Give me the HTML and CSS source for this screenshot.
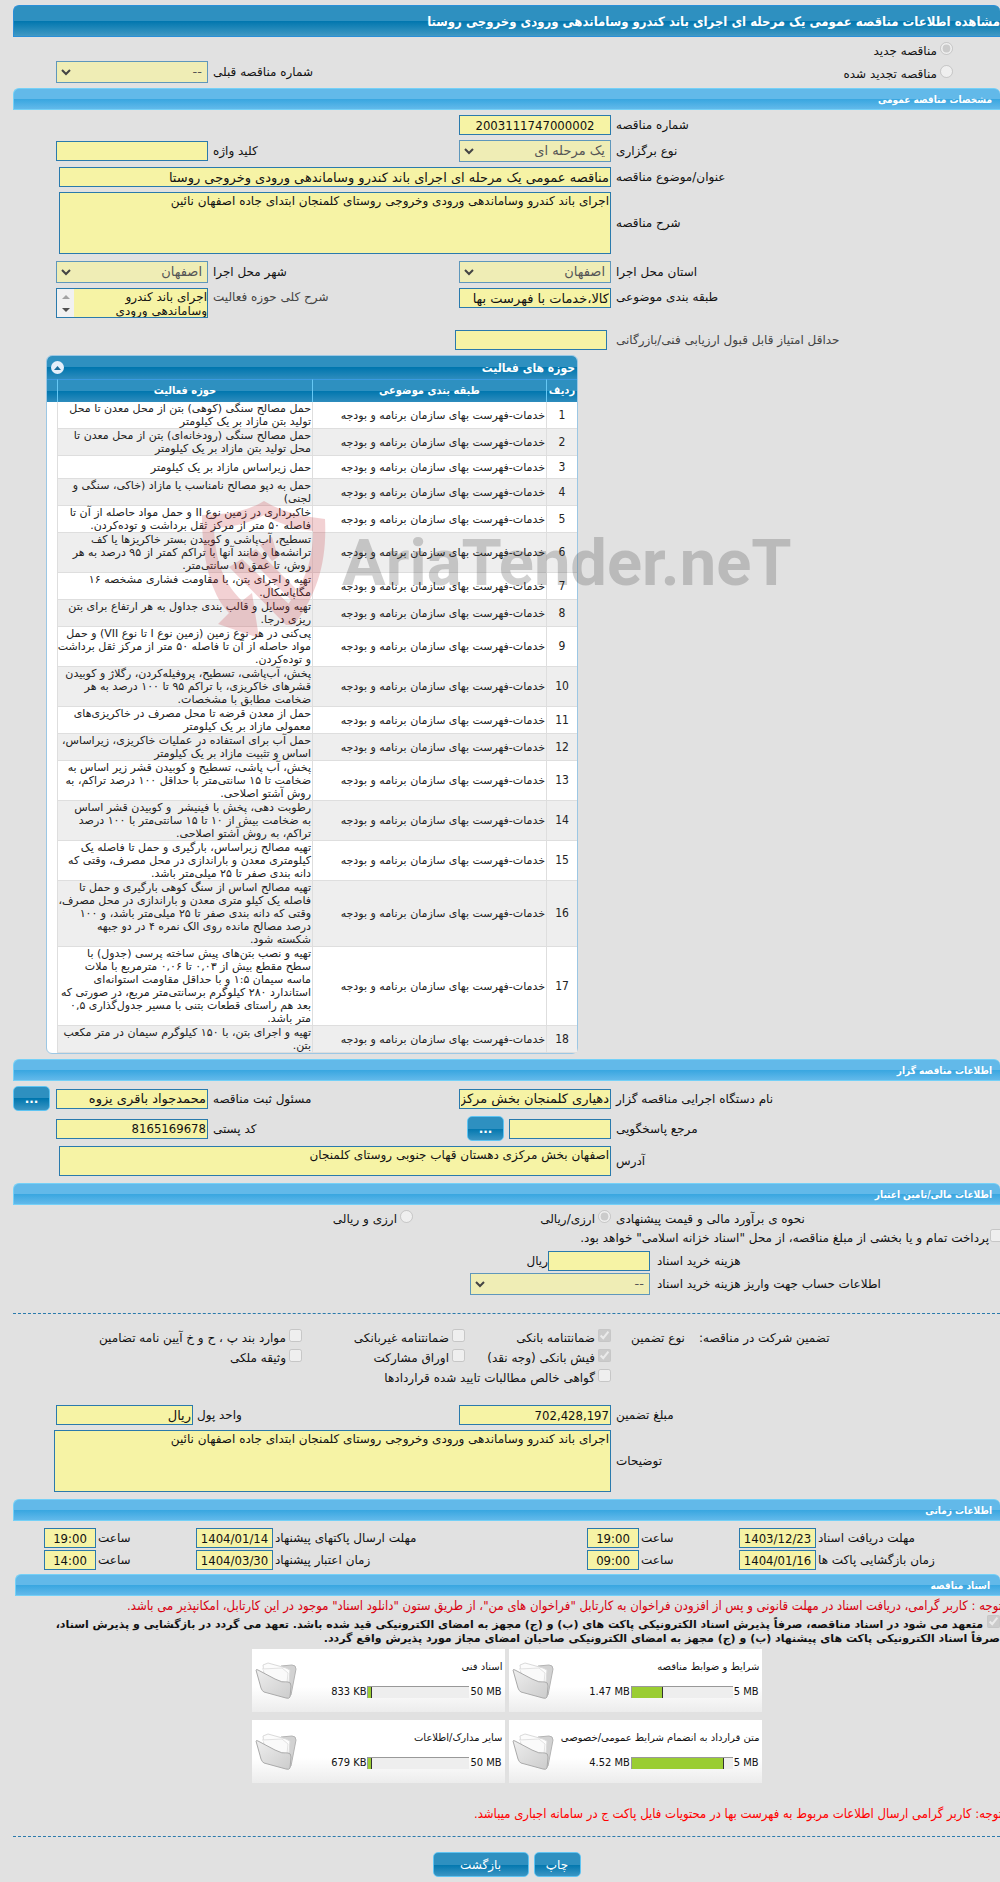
FILE: index.html
```html
<!DOCTYPE html>
<html lang="fa" dir="rtl">
<head>
<meta charset="utf-8">
<title>مشاهده اطلاعات مناقصه عمومی</title>
<link rel="stylesheet" href="styles.css">
</head>
<body>
<main class="page">
<h1 class="title-bar">مشاهده اطلاعات مناقصه عمومی یک مرحله ای اجرای باند کندرو وساماندهی ورودی وخروجی روستا</h1>

<div class="form kind">
  <div class="row">
    <label class="choice kind-choice"><input type="radio" name="kind" checked disabled>مناقصه جدید</label>
  </div>
  <div class="row kind-row">
    <label class="choice kind-choice"><input type="radio" name="kind" disabled>مناقصه تجدید شده</label>
    <span></span>
    <label class="lbl" for="prev">شماره مناقصه قبلی</label>
    <select id="prev" disabled><option>--</option></select>
  </div>
</div>

<h2 class="bar">مشخصات مناقصه عمومی</h2>
<section class="form">
  <div class="row">
    <label class="lbl" for="no">شماره مناقصه</label>
    <input class="num center" id="no" type="text" readonly value="2003111747000002">
  </div>
  <div class="row">
    <label class="lbl" for="type">نوع برگزاری</label>
    <select id="type" disabled><option>یک مرحله ای</option></select>
    <label class="lbl" for="kw">کلید واژه</label>
    <input id="kw" type="text" readonly>
  </div>
  <div class="row">
    <label class="lbl" for="subj">عنوان/موضوع مناقصه</label>
    <input class="wide" id="subj" type="text" readonly value="مناقصه عمومی یک مرحله ای اجرای باند کندرو وساماندهی ورودی وخروجی روستا">
  </div>
  <div class="row">
    <label class="lbl" for="desc">شرح مناقصه</label>
    <textarea class="wide tall" id="desc" readonly>اجرای باند کندرو وساماندهی ورودی وخروجی روستای کلمنجان ابتدای جاده اصفهان نائین</textarea>
  </div>
  <div class="row place">
    <label class="lbl" for="prov">استان محل اجرا</label>
    <select id="prov" disabled><option>اصفهان</option></select>
    <label class="lbl" for="city">شهر محل اجرا</label>
    <select id="city" disabled><option>اصفهان</option></select>
  </div>
  <div class="row top">
    <label class="lbl" for="cat">طبقه بندی موضوعی</label>
    <input id="cat" type="text" readonly value="کالا،خدمات با فهرست بها">
    <label class="lbl soft" for="scope">شرح کلی حوزه فعالیت</label>
    <textarea class="scroll" id="scope" readonly>اجرای باند کندرو وساماندهی ورودی وخروجی روستای کلمنجان ابتدای جاده اصفهان نائین</textarea>
  </div>
  <div class="row score">
    <label class="lbl soft" for="score">حداقل امتیاز قابل قبول ارزیابی فنی/بازرگانی</label>
    <input id="score" type="text" readonly>
  </div>
</section>

<section class="activity">
  <div class="activity-head">
    <h3>حوزه های فعالیت</h3>
    <button class="collapse" type="button" aria-label="بستن"><svg width="7" height="4" viewBox="0 0 7 4"><path d="M0 4L3.500 0L7 4z" fill="#1b6d9c"/></svg></button>
  </div>
  <table class="grid">
    <colgroup><col class="c-no"><col class="c-cat"><col class="c-act"><col class="c-end"></colgroup>
    <thead><tr><th>ردیف</th><th>طبقه بندی موضوعی</th><th>حوزه فعالیت</th><th></th></tr></thead>
    <tbody>
      <tr><td>1</td><td>خدمات-فهرست بهای سازمان برنامه و بودجه</td><td>حمل مصالح سنگی (کوهی) بتن از محل معدن تا محل<br>تولید بتن مازاد بر یک کیلومتر</td><td></td></tr>
      <tr><td>2</td><td>خدمات-فهرست بهای سازمان برنامه و بودجه</td><td>حمل مصالح سنگی (رودخانه‌ای) بتن از محل معدن تا<br>محل تولید بتن مازاد بر یک کیلومتر</td><td></td></tr>
      <tr><td>3</td><td>خدمات-فهرست بهای سازمان برنامه و بودجه</td><td>حمل زیراساس مازاد بر یک کیلومتر</td><td></td></tr>
      <tr><td>4</td><td>خدمات-فهرست بهای سازمان برنامه و بودجه</td><td>حمل به دپو مصالح نامناسب یا مازاد (خاکی، سنگی و<br>لجنی)</td><td></td></tr>
      <tr><td>5</td><td>خدمات-فهرست بهای سازمان برنامه و بودجه</td><td>خاکبرداری در زمین نوع II و حمل مواد حاصله از آن تا<br>فاصله ۵۰ متر از مرکز ثقل برداشت و توده‌کردن.</td><td></td></tr>
      <tr><td>6</td><td>خدمات-فهرست بهای سازمان برنامه و بودجه</td><td>تسطیح، آب‌پاشی و کوبیدن بستر خاکریزها یا کف<br>ترانشه‌ها و مانند آنها با تراکم کمتر از ۹۵ درصد به هر<br>روش، تا عمق ۱۵ سانتی‌متر.</td><td></td></tr>
      <tr><td>7</td><td>خدمات-فهرست بهای سازمان برنامه و بودجه</td><td>تهیه و اجرای بتن، با مقاومت فشاری مشخصه ۱۶<br>مگاپاسکال.</td><td></td></tr>
      <tr><td>8</td><td>خدمات-فهرست بهای سازمان برنامه و بودجه</td><td>تهیه وسایل و قالب بندی جداول به هر ارتفاع برای بتن<br>ریزی درجا.</td><td></td></tr>
      <tr><td>9</td><td>خدمات-فهرست بهای سازمان برنامه و بودجه</td><td>پی‌کنی در هر نوع زمین (زمین نوع I تا نوع VII) و حمل<br>مواد حاصله از آن تا فاصله ۵۰ متر از مرکز ثقل برداشت<br>و توده‌کردن.</td><td></td></tr>
      <tr><td>10</td><td>خدمات-فهرست بهای سازمان برنامه و بودجه</td><td>پخش، آب‌پاشی، تسطیح، پروفیله‌کردن، رگلاژ و کوبیدن<br>قشرهای خاکریزی، با تراکم ۹۵ تا ۱۰۰ درصد به هر<br>ضخامت مطابق با مشخصات.</td><td></td></tr>
      <tr><td>11</td><td>خدمات-فهرست بهای سازمان برنامه و بودجه</td><td>حمل از معدن قرضه تا محل مصرف در خاکریزی‌های<br>معمولی مازاد بر یک کیلومتر</td><td></td></tr>
      <tr><td>12</td><td>خدمات-فهرست بهای سازمان برنامه و بودجه</td><td>حمل آب برای استفاده در عملیات خاکریزی، زیراساس،<br>اساس و تثبیت مازاد بر یک کیلومتر</td><td></td></tr>
      <tr><td>13</td><td>خدمات-فهرست بهای سازمان برنامه و بودجه</td><td>پخش، آب پاشی، تسطیح و کوبیدن قشر زیر اساس به<br>ضخامت تا ۱۵ سانتی‌متر با حداقل ۱۰۰ درصد تراکم، به<br>روش آشتو اصلاحی.</td><td></td></tr>
      <tr><td>14</td><td>خدمات-فهرست بهای سازمان برنامه و بودجه</td><td>رطوبت دهی، پخش با فینیشر &nbsp;و کوبیدن قشر اساس<br>به ضخامت بیش از ۱۰ تا ۱۵ سانتی‌متر با ۱۰۰ درصد<br>تراکم، به روش آشتو اصلاحی.</td><td></td></tr>
      <tr><td>15</td><td>خدمات-فهرست بهای سازمان برنامه و بودجه</td><td>تهیه مصالح زیراساس، بارگیری و حمل تا فاصله یک<br>کیلومتری معدن و باراندازی در محل مصرف، وقتی که<br>دانه بندی صفر تا ۲۵ میلی‌متر باشد.</td><td></td></tr>
      <tr><td>16</td><td>خدمات-فهرست بهای سازمان برنامه و بودجه</td><td>تهیه مصالح اساس از سنگ کوهی بارگیری و حمل تا<br>فاصله یک کیلو متری معدن و باراندازی در محل مصرف،<br>وقتی که دانه بندی صفر تا ۲۵ میلی‌متر باشد، و ۱۰۰<br>درصد مصالح مانده روی الک نمره ۴ در دو جبهه<br>شکسته شود.</td><td></td></tr>
      <tr><td>17</td><td>خدمات-فهرست بهای سازمان برنامه و بودجه</td><td>تهیه و نصب بتن‌های پیش ساخته پرسی (جدول) با<br>سطح مقطع بیش از ۰,۰۳ تا ۰,۰۶ مترمربع با ملات<br>ماسه سیمان ۱:۵ و با حداقل مقاومت استوانه‌ای<br>استاندارد ۲۸۰ کیلوگرم برسانتی‌متر مربع، در صورتی که<br>بعد هم راستای قطعات بتنی با مسیر جدول‌گذاری ۰,۵<br>متر باشد.</td><td></td></tr>
      <tr><td>18</td><td>خدمات-فهرست بهای سازمان برنامه و بودجه</td><td>تهیه و اجرای بتن، با ۱۵۰ کیلوگرم سیمان در متر مکعب<br>بتن.</td><td></td></tr>
    </tbody>
  </table>
  <div class="watermark" dir="ltr">
    <svg width="124" height="138" viewBox="0 0 124 138" fill="none">
      <path d="M0 14Q40 14 62 0Q84 14 123 18C125 60 116 92 92 124L84 106C104 80 111 58 111 30Q84 27 62 14Q40 26 12 27C13 60 22 82 40 100L50 92L57 137L16 123L27 112C8 92 0 56 0 14z" fill="#c8323c"/>
      <path d="M27 66L40 58L92 108L90 124L84 124zM44 54L54 48L94 88L90 100zM58 44L70 36L76 56L70 60z" fill="#c8323c"/>
    </svg>
    <span>AriaTender.neT</span>
  </div>
</section>

<h2 class="bar">اطلاعات مناقصه گزار</h2>
<section class="form">
  <div class="row">
    <label class="lbl" for="org">نام دستگاه اجرایی مناقصه گزار</label>
    <input id="org" type="text" readonly value="دهیاری کلمنجان بخش مرکزی">
    <label class="lbl" for="owner">مسئول ثبت مناقصه</label>
    <input id="owner" type="text" readonly value="محمدجواد باقری یزوه">
    <button class="btn more last" type="button">...</button>
  </div>
  <div class="row">
    <label class="lbl" for="ref">مرجع پاسخگویی</label>
    <div class="with-button"><input id="ref" type="text" readonly><button class="btn more" type="button">...</button></div>
    <label class="lbl" for="zip">کد پستی</label>
    <input class="num" id="zip" type="text" readonly value="8165169678">
  </div>
  <div class="row">
    <label class="lbl" for="addr">آدرس</label>
    <textarea class="wide short" id="addr" readonly>اصفهان بخش مرکزی دهستان قهاب جنوبی روستای کلمنجان</textarea>
  </div>
</section>

<h2 class="bar spaced">اطلاعات مالی/تامین اعتبار</h2>
<section class="finance">
  <div class="estimate">
    <span class="lbl">نحوه ی برآورد مالی و قیمت پیشنهادی</span>
    <label class="choice"><input type="radio" name="cur" checked disabled>ارزی/ریالی</label>
    <label class="choice"><input type="radio" name="cur" disabled>ارزی و ریالی</label>
  </div>
  <label class="choice treasury"><input type="checkbox" disabled>پرداخت تمام و یا بخشی از مبلغ مناقصه، از محل "اسناد خزانه اسلامی" خواهد بود.</label>
  <div class="pay">
    <label class="lbl" for="cost">هزینه خرید اسناد</label>
    <div class="pay-field"><input id="cost" type="text" readonly>ریال</div>
    <label class="lbl" for="acc">اطلاعات حساب جهت واریز هزینه خرید اسناد</label>
    <select id="acc" disabled><option>--</option></select>
  </div>
</section>
<hr>
<section class="guarantee">
  <span class="g-title">تضمین شرکت در مناقصه:</span>
  <span class="g-kind">نوع تضمین</span>
  <label class="choice g-a"><input type="checkbox" checked disabled>ضمانتنامه بانکی</label>
  <label class="choice"><input type="checkbox" disabled>ضمانتنامه غیربانکی</label>
  <label class="choice"><input type="checkbox" disabled>موارد بند پ ، ح و خ آیین نامه تضامین</label>
  <label class="choice g-a"><input type="checkbox" checked disabled>فیش بانکی (وجه نقد)</label>
  <label class="choice"><input type="checkbox" disabled>اوراق مشارکت</label>
  <label class="choice"><input type="checkbox" disabled>وثیقه ملکی</label>
  <label class="choice g-a g-wide"><input type="checkbox" disabled>گواهی خالص مطالبات تایید شده قراردادها</label>
</section>
<section class="form">
  <div class="row">
    <label class="lbl" for="amount">مبلغ تضمین</label>
    <input class="num" id="amount" type="text" readonly value="702,428,197">
    <div class="unit"><label for="unit">واحد پول</label><input id="unit" type="text" readonly value="ریال"></div>
  </div>
  <div class="row">
    <label class="lbl" for="notes">توضیحات</label>
    <textarea class="wide tall full" id="notes" readonly>اجرای باند کندرو وساماندهی ورودی وخروجی روستای کلمنجان ابتدای جاده اصفهان نائین</textarea>
  </div>
</section>

<h2 class="bar spaced">اطلاعات زمانی</h2>
<section class="times">
  <label for="d1">مهلت دریافت اسناد</label><input class="num center" id="d1" type="text" readonly value="1403/12/23">
  <label for="h1">ساعت</label><input class="num center" id="h1" type="text" readonly value="19:00">
  <label for="d2">مهلت ارسال پاکتهای پیشنهاد</label><input class="num center" id="d2" type="text" readonly value="1404/01/14">
  <label for="h2">ساعت</label><input class="num center" id="h2" type="text" readonly value="19:00">
  <span></span>
  <label for="d3">زمان بازگشایی پاکت ها</label><input class="num center" id="d3" type="text" readonly value="1404/01/16">
  <label for="h3">ساعت</label><input class="num center" id="h3" type="text" readonly value="09:00">
  <label for="d4">زمان اعتبار پیشنهاد</label><input class="num center" id="d4" type="text" readonly value="1404/03/30">
  <label for="h4">ساعت</label><input class="num center" id="h4" type="text" readonly value="14:00">
</section>

<h2 class="bar docs">اسناد مناقصه</h2>
<p class="note">توجه : کاربر گرامی، دریافت اسناد در مهلت قانونی و پس از افزودن فراخوان به کارتابل "فراخوان های من"، از طریق ستون "دانلود اسناد" موجود در این کارتابل، امکانپذیر می باشد.</p>
<label class="pledge"><input type="checkbox" checked disabled>متعهد می شود در اسناد مناقصه، صرفاً پذیرش اسناد الکترونیکی پاکت های (ب) و (ج) مجهز به امضای الکترونیکی قید شده باشد. تعهد می گردد در بازگشایی و پذیرش اسناد،<br>صرفاً اسناد الکترونیکی پاکت های پیشنهاد (ب) و (ج) مجهز به امضای الکترونیکی صاحبان امضای مجاز مورد پذیرش واقع گردد.</label>

<svg class="defs" width="0" height="0" aria-hidden="true">
  <defs>
    <linearGradient id="fg" x1="0" y1="0" x2="1" y2="1"><stop offset="0" stop-color="#eeeeee"/><stop offset="1" stop-color="#cccccc"/></linearGradient>
    <symbol id="folder" viewBox="0 0 42 38">
      <path d="M26 4L37 3Q41 3 41 7L36 33L32 35z" fill="#d2d2d2" stroke="#b4b4b4"/>
      <path d="M8 3L13 1L31 6L35 8L33 32L10 20z" fill="#fcfcfc" stroke="#dadada"/>
      <path d="M7 7L27 6L33 11L31 30" fill="#fafafa" stroke="#e2e2e2"/>
      <path d="M1 8Q1 7 3 8L20 17Q27 21 33 20Q36 20 36 24L35 35Q34 37 31 36L9 30Q7 29 6 26z" fill="url(#fg)" stroke="#aaaaaa"/>
    </symbol>
  </defs>
</svg>
<section class="cards">
  <article class="card"><h3>شرایط و ضوابط مناقصه</h3><div class="usage"><span>5 MB</span><progress dir="ltr" value="31" max="100"></progress><span>1.47 MB</span></div><svg class="folder" width="42" height="38"><use href="#folder"/></svg></article>
  <article class="card"><h3>اسناد فنی</h3><div class="usage"><span>50 MB</span><progress dir="ltr" value="4" max="100"></progress><span>833 KB</span></div><svg class="folder" width="42" height="38"><use href="#folder"/></svg></article>
  <article class="card"><h3>متن قرارداد به انضمام شرایط عمومی/خصوصی</h3><div class="usage"><span>5 MB</span><progress dir="ltr" value="91" max="100"></progress><span>4.52 MB</span></div><svg class="folder" width="42" height="38"><use href="#folder"/></svg></article>
  <article class="card"><h3>سایر مدارک/اطلاعات</h3><div class="usage"><span>50 MB</span><progress dir="ltr" value="4" max="100"></progress><span>679 KB</span></div><svg class="folder" width="42" height="38"><use href="#folder"/></svg></article>
</section>
<p class="note warn">توجه: کاربر گرامی ارسال اطلاعات مربوط به فهرست بها در محتویات فایل پاکت ج در سامانه اجباری میباشد.</p>
<hr class="end">
<div class="actions"><button class="btn print" type="button">چاپ</button><button class="btn back" type="button">بازگشت</button></div>
</main>
</body>
</html>
```
FILE: styles.css
```css
* { box-sizing: border-box; }
body {
  margin: 0;
  background: #e1e1e1;
  color: #111;
  font: 12px/18px "DejaVu Sans", sans-serif;
  overflow-x: hidden;
}
.page { padding: 5px 0 5px 13px; overflow: hidden; }
h1, h2, h3, p { margin: 0; }

.title-bar {
  height: 32px;
  padding-top: 3px;
  border: 1px solid #2a8fd8;
  border-right: 0;
  border-radius: 6px 6px 0 0;
  background: linear-gradient(#2e90c0 50%, #0076ae 50%, #4199c4);
  color: #fff;
  font: bold 13px/26px "DejaVu Sans Condensed", "DejaVu Sans", sans-serif;
  white-space: nowrap;
}
.bar {
  height: 22px;
  padding: 1px 8px 0 0;
  border: 1px solid #74d0f7;
  border-right: 0;
  border-radius: 6px 6px 0 0;
  background: linear-gradient(#62b9e9 50%, #38a6e0 50%, #62b9ea);
  color: #fff;
  font: bold 10px/20px "DejaVu Sans Condensed", "DejaVu Sans", sans-serif;
}
.bar.spaced { margin-top: 7px; }
.bar.docs { margin: 4px 0 0 2px; padding-right: 10px; }

/* Form fields */
input[type="text"], select, textarea {
  display: block;
  width: 100%;
  min-width: 0;
  margin: 0;
  border: 1px solid #2a7aac;
  border-radius: 0;
  background: #f6f3a5;
  color: #111;
  font: 13px/16px "DejaVu Sans", sans-serif;
}
input[type="text"] { height: 20px; padding: 0 1px; }
input.num { font-family: "DejaVu Sans Condensed", "DejaVu Sans", sans-serif; }
input.center { text-align: center; }
select {
  height: 22px;
  padding: 0 5px 0 18px;
  border-color: #5f97bb;
  background: #efedb5 url("data:image/svg+xml,%3Csvg xmlns='http://www.w3.org/2000/svg' width='10' height='7'%3E%3Cpath d='M1 1l4 4 4-4' fill='none' stroke='%23444' stroke-width='2'/%3E%3C/svg%3E") no-repeat 4px 7px;
  color: #555;
  opacity: 1;
  appearance: none;
}
textarea {
  padding: 1px;
  overflow: hidden;
  resize: none;
  font-size: 12px;
  line-height: 15px;
}
textarea.tall { height: 62px; }
textarea.short { height: 30px; }
textarea.scroll {
  height: 30px;
  padding: 1px 0 0 18px;
  line-height: 14px;
  background: #f6f3a5 url("data:image/svg+xml,%3Csvg xmlns='http://www.w3.org/2000/svg' width='17' height='28'%3E%3Cpath d='M0 0h17v28H0z' fill='%23f1f1f1'/%3E%3Cpath d='M5 10l4-4 4 4z' fill='%23a3a3a3'/%3E%3Cpath d='M5 19l4 4 4-4z' fill='%23505050'/%3E%3C/svg%3E") no-repeat left top;
}
input[type="radio"], input[type="checkbox"] { width: 13px; height: 13px; margin: 0; flex: none; }

.form { display: flex; flex-direction: column; gap: 5px; padding-top: 5px; }
.row {
  display: grid;
  grid-template-columns: 389fr 152px 251fr 152px 43px;
  align-items: center;
}
.lbl { padding-left: 5px; text-align: end; white-space: nowrap; }
.soft { color: #444; }
.wide { grid-column: 2 / 5; justify-self: start; }
.row .wide { width: calc(100% - 3px); }
.row .wide.full { width: calc(100% + 2px); }
.row.top { align-items: start; }
.place { padding-top: 2px; }
.score { padding-top: 7px; }
.score input { margin-right: 4px; }
.choice { display: flex; gap: 3px; white-space: nowrap; line-height: 18px; }
.kind { gap: 0; padding-bottom: 5px; }
.kind-row { height: 23px; }
.kind-row .kind-choice { padding-top: 5px; }
.kind-choice { padding-right: 47px; }
.with-button { display: grid; grid-template-columns: 102px 37px; gap: 5px; align-items: center; }

.btn {
  height: 25px;
  padding: 0;
  border: 1px solid #5fc4f2;
  border-radius: 5px;
  background: linear-gradient(#2e90c0 50%, #0076ae 50%, #3b96c4);
  color: #fff;
  font: bold 12px/20px "DejaVu Sans", sans-serif;
}
.more { width: 37px; }
.more.last { justify-self: end; }

/* Activity table */
.activity {
  position: relative;
  width: 532px;
  margin: 5px auto 5px 33px;
  border: 1px solid #9cc7e4;
  border-radius: 6px;
  background: #fff;
}
.activity-head {
  display: flex;
  align-items: center;
  justify-content: space-between;
  height: 23px;
  padding: 0 2px 0 4px;
  border-radius: 5px 5px 0 0;
  background: linear-gradient(#2e90c0 50%, #0076ae 50%, #2e8cbd);
  color: #fff;
}
.activity-head h3 { font: bold 12px/20px "DejaVu Sans Condensed", "DejaVu Sans", sans-serif; }
.collapse {
  display: flex;
  align-items: center;
  justify-content: center;
  width: 13px;
  height: 13px;
  padding: 0;
  border: 0;
  border-radius: 7px;
  background: #e4effa;
}
.grid {
  width: 100%;
  table-layout: fixed;
  border-collapse: separate;
  border-spacing: 0;
  font-size: 11px;
  line-height: 13px;
  color: #222;
}
.c-no { width: 31px; }
.c-cat { width: 234px; }
.c-act { width: 255px; }
.grid th {
  height: 23px;
  padding: 0;
  border-top: 1px solid #3a9ae0;
  border-left: 1px solid #66c8f4;
  background: linear-gradient(#2e90c0 50%, #0076ae 50%, #2e8cbd);
  color: #fff;
  font: bold 11px/16px "DejaVu Sans Condensed", "DejaVu Sans", sans-serif;
  white-space: nowrap;
}
.grid th:last-child { border-left: 0; }
.grid td {
  height: 23px;
  padding: 0 1px 0 0;
  border-bottom: 1px solid #dedede;
  border-left: 1px solid #dedede;
  white-space: nowrap;
}
.grid tr:nth-child(even) td { background: #eee; }
.grid td:first-child { padding: 0; text-align: center; font-size: 12px; font-family: "DejaVu Sans Condensed", "DejaVu Sans", sans-serif; }
.grid tbody tr td:last-child { border: 0; background: none; }
.watermark {
  position: absolute;
  top: 145px;
  left: 155px;
  display: flex;
  align-items: center;
  gap: 16px;
  opacity: 0.22;
  pointer-events: none;
  color: #333;
  font: bold 65px/80px Roboto, sans-serif;
}
.watermark span { padding-bottom: 14px; }

/* Finance */
.estimate { display: grid; grid-template-columns: 389fr 198px 400fr; padding-top: 5px; }
.treasury { margin: 1px -3px 0 0; gap: 1px; }
.pay {
  display: grid;
  grid-template-columns: 350fr 180px 457fr;
  align-items: center;
  row-gap: 2px;
  padding-top: 4px;
}
.pay .lbl { grid-column: 1; padding-left: 7px; }
.pay-field { display: flex; align-items: center; }
.pay-field input[type="text"] { width: 102px; }
hr { height: 0; margin: 18px 0 0; border: 0; border-top: 1px dashed #2a7aac; }
.guarantee {
  display: grid;
  grid-template-columns: 301fr 68px 20px 146px 163px 289fr;
  grid-auto-rows: 20px;
  padding: 15px 0 11px;
}
.g-title, .g-kind { text-align: end; white-space: nowrap; }
.g-a { grid-column: 4; }
.unit { display: grid; grid-template-columns: 1fr 137px; grid-column: 3 / 5; gap: 4px; align-items: center; }
.unit label { text-align: end; }

.times {
  display: grid;
  grid-template-columns: 184fr 77px 100fr 52px 314fr 77px 100fr 52px 31fr;
  gap: 2px 0;
  align-items: center;
  padding-top: 7px;
}
.times label { padding-left: 2px; text-align: end; white-space: nowrap; }

/* Documents */
.note {
  margin: 1px -2px 0 0;
  color: #d8000f;
  font: 13px/18px "DejaVu Sans Condensed", "DejaVu Sans", sans-serif;
  white-space: nowrap;
}
.note.warn { margin-top: 22px; color: #f00; }
.pledge { display: block; font: bold 11px/14px "DejaVu Sans", sans-serif; white-space: nowrap; }
.pledge input[type="checkbox"] { margin: 0 0 0 4px; }
.defs { display: block; }
.cards { display: grid; grid-template-columns: 253px 253px; gap: 8px 4px; justify-content: center; margin-top: 3px; }
.card {
  display: grid;
  grid-template: 34px 29px / 1fr 42px;
  padding: 0 2px 0 3px;
  background: linear-gradient(#fff 60%, #ececec);
}
.card h3 { padding-top: 9px; font-size: 10px; font-weight: normal; white-space: nowrap; }
.folder { grid-column: 2; grid-row: 1 / 3; align-self: center; }
.usage {
  display: flex;
  align-items: center;
  gap: 1px;
  height: 18px;
  padding-right: 1px;
  font: 11px/16px "DejaVu Sans Condensed", "DejaVu Sans", sans-serif;
}
.usage span { direction: ltr; }
progress {
  width: 102px;
  height: 12px;
  border: 0;
  border-top: 1px solid #999;
  border-left: 1px solid #999;
  background: #eee;
  appearance: none;
}
progress::-webkit-progress-bar { background: #eee; }
progress::-webkit-progress-value { border-right: 1px solid #333; background: #9acd32; }
hr.end { margin-top: 13px; }
.actions { display: flex; justify-content: center; gap: 5px; padding-top: 15px; }
.print { width: 47px; font-weight: normal; }
.back { width: 96px; font-weight: normal; }
```
